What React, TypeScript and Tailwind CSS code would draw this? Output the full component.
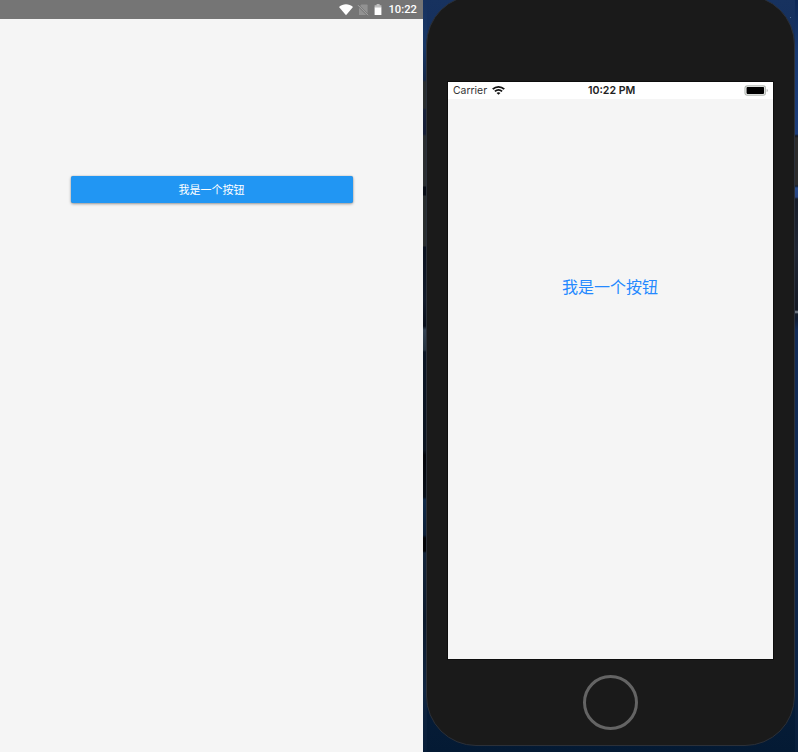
const LABEL = '我是一个按钮';

function AndroidStatusBar() {
  return (
    <div className="flex h-[19px] items-center bg-[#757575] pl-[339px] text-white">
      <svg className="h-3 w-[14px] shrink-0" viewBox="0 0 14 12" fill="currentColor">
        <path d="M7 11.3 0 3C4-.6 10-.6 14 3Z" />
      </svg>
      <svg className="ml-1 h-3 w-3 shrink-0" viewBox="0 0 12 12">
        <path d="M4.4.6H10a.6.6 0 0 1 .6.6V11H2V3Z" fill="#929292" />
        <path d="m1 1.2 10 10" stroke="#757575" strokeWidth="2.2" />
        <path d="m1 1.2 10 10" stroke="#a8a8a8" strokeWidth="1" />
      </svg>
      <svg className="ml-[5px] h-3 w-2 shrink-0" viewBox="0 0 8 12">
        <path d="M2.6 0h3v1.2h1.8v2.6H.6V1.2h2Z" fill="#c0c0c0" />
        <path d="M.6 3.4h6.8V11H.6Z" fill="#fff" />
      </svg>
      <span className="ml-[6.5px] font-['Roboto',sans-serif] text-[11.2px] leading-[19px] font-medium">10:22</span>
    </div>
  );
}

function AndroidScreen() {
  return (
    <section className="h-full w-[423px] shrink-0 bg-[#f5f5f5]">
      <AndroidStatusBar />
      <button className="mt-[156.5px] ml-[70.5px] block h-[27.5px] w-[282px] rounded-[2px] bg-[#2196f3] font-['Noto_Sans_CJK_SC',sans-serif] text-[11px] leading-[26px] text-white shadow-[0_1px_3px_rgba(0,0,0,0.38),0_0_1px_rgba(0,0,0,0.35)]">
        {LABEL}
      </button>
    </section>
  );
}

function IosStatusBar() {
  return (
    <div className="grid h-[17px] grid-cols-[140px_1fr_29px] items-center bg-white font-['Inter',sans-serif] text-[10.4px] leading-[17px] text-[#333]">
      <div className="flex items-center pl-[5px]">
        <span className="w-[38.5px] whitespace-nowrap">Carrier</span>
        <svg className="h-[9px] w-[13px]" viewBox="0 0 12 9" preserveAspectRatio="none" fill="none" stroke="#111" strokeWidth="1.8">
          <path d="M.7 3.2C3.8.2 8.2.2 11.3 3.2M2.7 5.4c2-1.8 4.6-1.8 6.6 0" />
          <path d="M6 8.8 4.2 7c1-.9 2.6-.9 3.6 0Z" fill="#111" stroke="none" />
        </svg>
      </div>
      <span className="text-[10.6px] font-semibold whitespace-nowrap text-[#222]">10:22 PM</span>
      <svg className="h-[11px] w-[25px]" viewBox="0 0 25 11">
        <rect x="1" y=".8" width="20.4" height="9.4" rx="2.2" fill="#fff" stroke="#b5bab5" strokeWidth="1.2" />
        <rect x="2.5" y="2.1" width="17.6" height="6.8" rx=".8" fill="#000" />
        <path d="M22.7 4v3c1.4-.4 1.4-2.6 0-3Z" fill="#aaa" />
      </svg>
    </div>
  );
}

function Iphone() {
  return (
    <div className="relative -mt-[5px] ml-[3px] flex h-[751px] w-[369px] flex-col items-center rounded-[50px] border border-[#2b3039] bg-[#1a1a1a] pt-[86px]">
      <div className="h-[577px] w-[325px] bg-[#f5f5f5] shadow-[0_0_0_1px_#0d0d0d]">
        <IosStatusBar />
        <button className="mt-[173px] block h-7 w-full pr-px font-['Noto_Sans_CJK_SC',sans-serif] text-[16px] leading-7 text-[#2489ff]">
          {LABEL}
        </button>
      </div>
      <div className="mt-[16px] mr-px size-[55px] rounded-full border-[3px] border-[#646464]" />
    </div>
  );
}

export default function App() {
  return (
    <main className="flex h-[752px] w-[798px] overflow-hidden">
      <AndroidScreen />
      <section className="relative flow-root h-full w-[375px] overflow-hidden bg-[linear-gradient(180deg,#17325f_0px,#132d5c_70px,#0b1830_130px,#0a1424_600px,#071d38_690px,#041a34_752px)]">
        <div className="absolute inset-y-0 left-0 w-1 bg-[linear-gradient(180deg,#17325f_0px,#183766_45px,#142747_80px,#292d2e_82px,#292d2e_108px,#17213a_110px,#151d35_134px,#2a2e30_136px,#2a2e30_186px,#080c15_187px,#080c15_195px,#292d2e_196px,#292d2e_246px,#0a111f_247px,#121b2a_300px,#080e1a_326px,#354353_330px,#25323f_350px,#0a1523_352px,#0b1420_450px,#020409_455px,#080f19_497px,#102a49_500px,#0b1e36_535px,#020408_538px,#020408_551px,#14253a_553px,#0b192b_620px,#112641_690px,#071d38_752px)]" />
        <div className="absolute inset-y-0 right-0 w-[3px] bg-[linear-gradient(180deg,#0d2856_0px,#183970_50px,#1c3d7b_134px,#141820_136px,#2c2c2c_138px,#2c2c2c_185px,#101b31_186px,#284b89_188px,#284480_197px,#171d29_199px,#202634_250px,#141924_310px,#87909a_312px,#151e2b_314px,#101c32_319px,#122c58_330px,#10284d_550px,#091f3c_752px)]" />
        <div className="absolute top-[17px] left-[367px] size-px bg-[#506e93]" />
        <Iphone />
      </section>
    </main>
  );
}
